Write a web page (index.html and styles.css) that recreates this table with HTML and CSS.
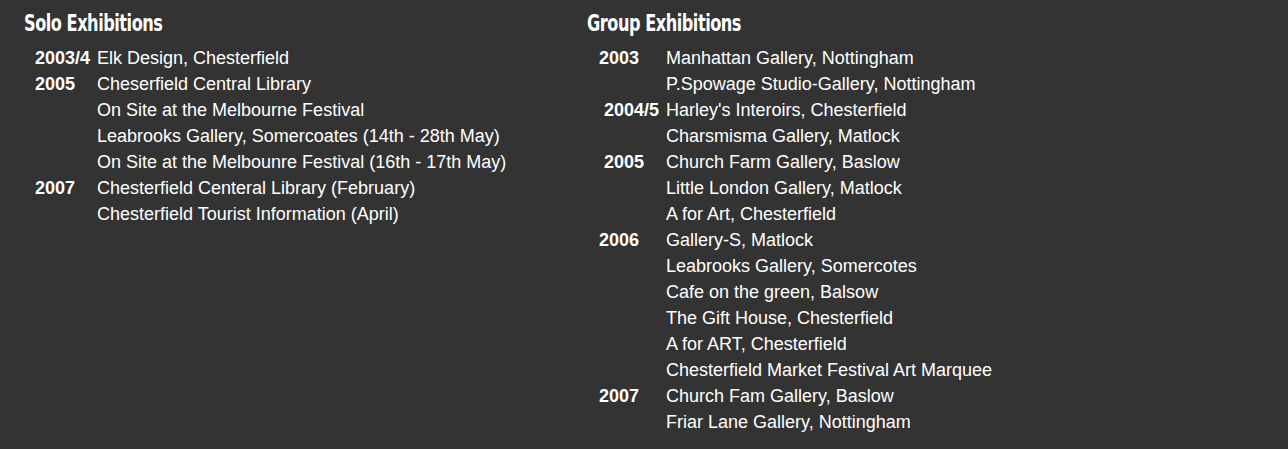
FILE: index.html
```html
<!DOCTYPE html>
<html lang="en">
<head>
<meta charset="utf-8">
<title>Exhibitions</title>
<link rel="stylesheet" href="styles.css">
</head>
<body>
<div class="page">
  <section class="col col-solo">
    <h2 class="heading">Solo Exhibitions</h2>
    <div class="list list-solo">
      <span class="year">2003/4</span><span class="place">Elk Design, Chesterfield</span>
      <span class="year">2005</span><span class="place">Cheserfield Central Library</span>
      <span class="year"></span><span class="place">On Site at the Melbourne Festival</span>
      <span class="year"></span><span class="place">Leabrooks Gallery, Somercoates (14th - 28th May)</span>
      <span class="year"></span><span class="place">On Site at the Melbounre Festival (16th - 17th May)</span>
      <span class="year">2007</span><span class="place">Chesterfield Centeral Library (February)</span>
      <span class="year"></span><span class="place">Chesterfield Tourist Information (April)</span>
    </div>
  </section>
  <section class="col col-group">
    <h2 class="heading">Group Exhibitions</h2>
    <div class="list list-group">
      <span class="year">2003</span><span class="place">Manhattan Gallery, Nottingham</span>
      <span class="year"></span><span class="place">P.Spowage Studio-Gallery, Nottingham</span>
      <span class="year year-indent">2004/5</span><span class="place">Harley's Interoirs, Chesterfield</span>
      <span class="year"></span><span class="place">Charsmisma Gallery, Matlock</span>
      <span class="year year-indent">2005</span><span class="place">Church Farm Gallery, Baslow</span>
      <span class="year"></span><span class="place">Little London Gallery, Matlock</span>
      <span class="year"></span><span class="place">A for Art, Chesterfield</span>
      <span class="year">2006</span><span class="place">Gallery-S, Matlock</span>
      <span class="year"></span><span class="place">Leabrooks Gallery, Somercotes</span>
      <span class="year"></span><span class="place">Cafe on the green, Balsow</span>
      <span class="year"></span><span class="place">The Gift House, Chesterfield</span>
      <span class="year"></span><span class="place">A for ART, Chesterfield</span>
      <span class="year"></span><span class="place">Chesterfield Market Festival Art Marquee</span>
      <span class="year">2007</span><span class="place">Church Fam Gallery, Baslow</span>
      <span class="year"></span><span class="place">Friar Lane Gallery, Nottingham</span>
    </div>
  </section>
</div>
</body>
</html>
```

FILE: styles.css
```css
html, body {
  margin: 0;
  padding: 0;
  background: #333333;
}

body {
  color: #ffffff;
  font-family: "Liberation Sans", Arial, sans-serif;
  font-size: 18px;
}

.page {
  display: grid;
  grid-template-columns: 563px auto;
  padding: 9px 0 0 24px;
}

.heading {
  margin: 0;
  font-family: "Liberation Sans Narrow", "DejaVu Sans Condensed", sans-serif;
  font-weight: bold;
  font-size: 23px;
  line-height: 28px;
  letter-spacing: -0.6px;
  color: #ffffff;
  transform-origin: left center;
  transform: scaleX(0.78);
  white-space: nowrap;
}

.list {
  display: grid;
  margin-top: 8px;
  margin-left: 11px;
  line-height: 26px;
}

.list-solo {
  grid-template-columns: 62px auto;
}

.list-group {
  margin-left: 12px;
  grid-template-columns: 67px auto;
}

.year {
  font-weight: bold;
}

.year-indent {
  padding-left: 5px;
}

.place {
  white-space: nowrap;
}
```
